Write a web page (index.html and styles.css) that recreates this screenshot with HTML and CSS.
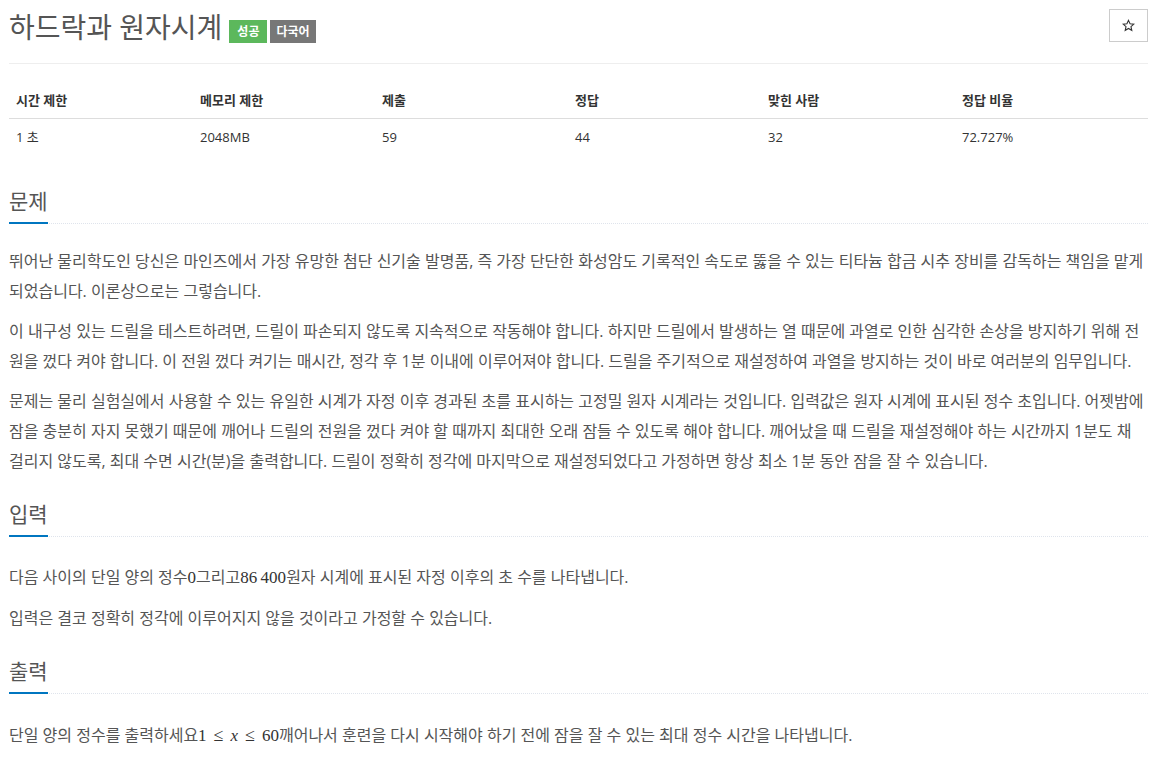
FILE: index.html
```html
<!DOCTYPE html>
<html lang="ko">
<head>
<meta charset="utf-8">
<title>하드락과 원자시계</title>
<link rel="stylesheet" href="styles.css">
</head>
<body>
<div class="page">
  <div class="title-row">
    <h1 class="title">하드락과 원자시계<span class="label label-success">성공</span><span class="label label-default">다국어</span></h1>
    <button class="star-btn" type="button" aria-label="즐겨찾기">
      <svg width="13" height="13" viewBox="0 0 24 24"><path d="M12 2.5l2.9 6.3 6.9.7-5.2 4.6 1.5 6.8L12 17.4l-6.1 3.5 1.5-6.8-5.2-4.6 6.9-.7z" fill="none" stroke="#333" stroke-width="2" stroke-linejoin="miter"/></svg>
    </button>
  </div>

  <table class="info">
    <thead>
      <tr><th class="c1">시간 제한</th><th class="c2">메모리 제한</th><th class="c3">제출</th><th class="c4">정답</th><th class="c5">맞힌 사람</th><th class="c6">정답 비율</th></tr>
    </thead>
    <tbody>
      <tr><td>1 초</td><td>2048MB</td><td>59</td><td>44</td><td>32</td><td>72.727%</td></tr>
    </tbody>
  </table>

  <section class="section">
    <div class="headline"><h2>문제</h2></div>
    <div class="text">
      <p>뛰어난 물리학도인 당신은 마인즈에서 가장 유망한 첨단 신기술 발명품, 즉 가장 단단한 화성암도 기록적인 속도로 뚫을 수 있는 티타늄 합금 시추 장비를 감독하는 책임을 맡게 되었습니다. 이론상으로는 그렇습니다.</p>
      <p>이 내구성 있는 드릴을 테스트하려면, 드릴이 파손되지 않도록 지속적으로 작동해야 합니다. 하지만 드릴에서 발생하는 열 때문에 과열로 인한 심각한 손상을 방지하기 위해 전원을 껐다 켜야 합니다. 이 전원 껐다 켜기는 매시간, 정각 후 1분 이내에 이루어져야 합니다. 드릴을 주기적으로 재설정하여 과열을 방지하는 것이 바로 여러분의 임무입니다.</p>
      <p>문제는 물리 실험실에서 사용할 수 있는 유일한 시계가 자정 이후 경과된 초를 표시하는 고정밀 원자 시계라는 것입니다. 입력값은 원자 시계에 표시된 정수 초입니다. 어젯밤에 잠을 충분히 자지 못했기 때문에 깨어나 드릴의 전원을 껐다 켜야 할 때까지 최대한 오래 잠들 수 있도록 해야 합니다. 깨어났을 때 드릴을 재설정해야 하는 시간까지 1분도 채 걸리지 않도록, 최대 수면 시간(분)을 출력합니다. 드릴이 정확히 정각에 마지막으로 재설정되었다고 가정하면 항상 최소 1분 동안 잠을 잘 수 있습니다.</p>
    </div>
  </section>

  <section class="section">
    <div class="headline"><h2>입력</h2></div>
    <div class="text">
      <p>다음 사이의 단일 양의 정수<span class="math">0</span>그리고<span class="math">86&#8201;400</span>원자 시계에 표시된 자정 이후의 초 수를 나타냅니다.</p>
      <p>입력은 결코 정확히 정각에 이루어지지 않을 것이라고 가정할 수 있습니다.</p>
    </div>
  </section>

  <section class="section">
    <div class="headline"><h2>출력</h2></div>
    <div class="text">
      <p>단일 양의 정수를 출력하세요<span class="math">1<span class="rel">≤</span><i>x</i><span class="rel">≤</span>60</span>깨어나서 훈련을 다시 시작해야 하기 전에 잠을 잘 수 있는 최대 정수 시간을 나타냅니다.</p>
    </div>
  </section>
</div>
</body>
</html>
```

FILE: styles.css
```css
html, body {
  margin: 0;
  padding: 0;
  background: #fff;
}
body {
  font-family: "Open Sans", "Noto Sans CJK KR", sans-serif;
  color: #555;
  font-size: 13px;
}
.page {
  padding: 0 9px;
}
.title-row {
  display: flex;
  justify-content: space-between;
  align-items: flex-start;
  padding-top: 9px;
  padding-bottom: 18px;
  border-bottom: 1px solid #eee;
}
.title {
  margin: 0;
  font-size: 28px;
  font-weight: 400;
  line-height: 36px;
  color: #555;
}
.label {
  display: inline-block;
  vertical-align: baseline;
  font-size: 12px;
  font-weight: 700;
  line-height: 23px;
  padding: 0 7px;
  color: #fff;
  position: relative;
  top: -2px;
}
.label-success { background: #5cb85c; margin-left: 7px; padding: 0 8px; }
.label-default { background: #777; margin-left: 3px; padding: 0 6px; }
.star-btn {
  width: 39px;
  height: 33px;
  padding: 0;
  background: #fff;
  border: 1px solid #ccc;
  display: flex;
  align-items: center;
  justify-content: center;
}
.info {
  width: 100%;
  table-layout: fixed;
  border-collapse: collapse;
  margin-top: 18px;
  margin-bottom: 31px;
  color: #333;
}
.info th, .info td {
  box-sizing: border-box;
  text-align: left;
  padding: 8px 7px;
  line-height: 20px;
  font-size: 13px;
}
.info th {
  font-weight: 700;
  border-bottom: 1px solid #ddd;
}
.c1 { width: 184px; }
.c2 { width: 182px; }
.c3 { width: 193px; }
.c4 { width: 193px; }
.c5 { width: 194px; }
.headline {
  border-bottom: 1px dotted #dfe4ec;
  margin: 0 0 22px;
}
.headline h2 {
  display: inline-block;
  margin: 0 0 -1px;
  font-size: 21px;
  font-weight: 400;
  line-height: 30px;
  padding-bottom: 6px;
  border-bottom: 2px solid #0076c0;
  color: #555;
}
.text p {
  margin: 0 0 10px;
  font-size: 16px;
  line-height: 30px;
}
.section + .section { margin-top: 23px; }
.math {
  display: inline-block;
  padding-top: 4px;
  line-height: 30px;
  font-family: "Liberation Serif", "DejaVu Serif", serif;
  font-size: 17px;
  color: #333;
}
.math i {
  font-style: italic;
}
.rel {
  margin: 0 7px;
  font-size: 18px;
}
```
